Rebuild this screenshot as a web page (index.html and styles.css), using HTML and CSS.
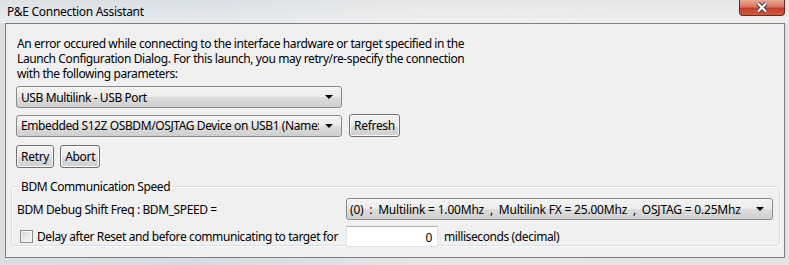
FILE: index.html
```html
<!DOCTYPE html>
<html lang="en">
<head>
    <meta charset="UTF-8" />
    <title>P&amp;E Connection Assistant</title>
    <link rel="stylesheet" href="styles.css">
</head>
<body>

    <div class="window">
        <div class="titlebar">
            <span class="title">P&amp;E Connection Assistant</span>
            <div class="close-btn">
                <svg width="16" height="11" viewBox="0 0 16 11">
                    <path d="M4 1.5 L12 9.5 M12 1.5 L4 9.5" stroke="#3b3f4a" stroke-width="4.2" />
                    <path d="M4 1.5 L12 9.5 M12 1.5 L4 9.5" stroke="#ffffff" stroke-width="2.2" />
                </svg>
            </div>
        </div>

        <div class="client">
            <p class="message">An error occured while connecting to the interface hardware or target specified in the
                Launch Configuration Dialog. For this launch, you may retry/re-specify the connection
                with the following parameters:</p>

            <div class="combo combo-wide">
                <span class="combo-text">USB Multilink - USB Port</span>
                <span class="arrow"></span>
            </div>

            <div class="row">
                <div class="combo combo-wide">
                    <span class="combo-text">Embedded S12Z OSBDM/OSJTAG Device on USB1 (Name:</span>
                    <span class="arrow"></span>
                </div>
                <button class="btn">Refresh</button>
            </div>

            <div class="row buttons">
                <button class="btn">Retry</button>
                <button class="btn">Abort</button>
            </div>

            <fieldset class="group">
                <legend>BDM Communication Speed</legend>

                <div class="field">
                    <span class="field-label">BDM Debug Shift Freq : BDM_SPEED =</span>
                    <div class="combo combo-speed">
                        <span class="combo-text">(0)  :  Multilink = 1.00Mhz  ,  Multilink FX = 25.00Mhz  ,  OSJTAG = 0.25Mhz</span>
                        <span class="arrow"></span>
                    </div>
                </div>

                <div class="field">
                    <label class="field-label check">
                        <span class="checkbox"></span>
                        Delay after Reset and before communicating to target for
                    </label>
                    <div class="delay">
                        <span class="textbox">0</span>
                        <span>milliseconds (decimal)</span>
                    </div>
                </div>
            </fieldset>
        </div>
    </div>

</body>
</html>
```

FILE: styles.css
```css
body {
    margin: 0;
    padding: 0;
    font-family: 'Noto Sans', 'Open Sans', sans-serif;
    font-size: 12px;
    color: #000;
}

.window {
    width: 789px;
    height: 265px;
    box-sizing: border-box;
    padding: 0 4px 7px 5px;
    background: linear-gradient(90deg, #dcdfe2 0%, #d4dbe3 25%, #dde0e3 38%, #e4e5e6 55%, #e2e3e4 100%);
}

.titlebar {
    height: 23px;
    display: flex;
    align-items: flex-start;
    background: linear-gradient(180deg, rgba(255, 255, 255, 0.1) 0%, rgba(255, 255, 255, 0.4) 100%);
    margin: 0 -4px 0 -5px;
}

.title {
    padding: 3px 0 0 7px;
    font-size: 12px;
    color: #000;
    letter-spacing: -0.3px;
}

.close-btn {
    margin-left: auto;
    margin-right: 4px;
    width: 46px;
    height: 16px;
    box-sizing: border-box;
    border: 1px solid #6b2a21;
    border-top: none;
    border-radius: 0 0 4px 4px;
    background: linear-gradient(180deg, #e9a897 0%, #d97760 45%, #c4402a 55%, #d4583c 100%);
    display: flex;
    justify-content: center;
    align-items: center;
}

.client {
    height: 235px;
    box-sizing: border-box;
    border: 1px solid #7d7f82;
    background: #f0f0f0;
    padding: 12px 5px 0 10px;
}

.message {
    margin: 0 0 5px 1px;
    line-height: 15px;
    width: 470px;
    letter-spacing: -0.4px;
}

.row {
    display: flex;
    align-items: center;
    gap: 7px;
    margin-top: 6px;
}

.buttons {
    margin-top: 8px;
    gap: 6px;
}

.combo {
    display: flex;
    align-items: center;
    height: 22px;
    box-sizing: border-box;
    border: 1px solid #8a8a8a;
    border-radius: 3px;
    background: linear-gradient(180deg, #f4f4f4 0%, #ebebeb 50%, #dddddd 51%, #cfcfcf 100%);
    padding: 0 8px 0 4px;
    letter-spacing: -0.4px;
}

.combo-wide {
    width: 326px;
}

.combo-text {
    flex: 1;
    white-space: pre;
    overflow: hidden;
}

.arrow {
    width: 0;
    height: 0;
    margin-left: 6px;
    border-left: 4px solid transparent;
    border-right: 4px solid transparent;
    border-top: 4px solid #000;
}

.btn {
    font-family: inherit;
    font-size: 12px;
    height: 23px;
    padding: 0 4px;
    border: 1px solid #707070;
    border-radius: 3px;
    background: linear-gradient(180deg, #f2f2f2 0%, #ebebeb 50%, #dddddd 51%, #cfcfcf 100%);
    box-shadow: inset 0 0 0 1px #fbfbfb;
    letter-spacing: -0.3px;
}

.group {
    margin: 10px 0 0 -5px;
    width: 768px;
    height: 68px;
    box-sizing: border-box;
    border: 1px solid #d5dfe5;
    border-radius: 3px;
    box-shadow: inset 1px 1px 0 #fff, 1px 1px 0 #fff;
    padding: 3px 6px 0 5px;
}

.group legend {
    padding: 0 2px;
    margin-left: 2px;
    letter-spacing: -0.4px;
}

.field {
    display: grid;
    grid-template-columns: 329px 1fr;
    align-items: center;
    letter-spacing: -0.4px;
}

.field + .field {
    margin-top: 6px;
}

.field-label {
    white-space: nowrap;
}

.combo-speed {
    width: 427px;
    padding-left: 3px;
    letter-spacing: -0.2px;
}

.check {
    display: flex;
    align-items: center;
    gap: 4px;
    padding-left: 3px;
}

.checkbox {
    width: 11px;
    height: 11px;
    border: 1px solid #8e8f8f;
    background: linear-gradient(135deg, #d2d2d2 0%, #ececec 60%, #f6f6f6 100%);
    box-shadow: inset 0 0 0 1px #f4f4f4;
}

.delay {
    display: flex;
    align-items: center;
    gap: 6px;
}

.textbox {
    width: 92px;
    height: 21px;
    box-sizing: border-box;
    border: 1px solid #e2e3ea;
    border-top-color: #abadb3;
    background: #fff;
    text-align: right;
    padding: 2px 5px 0 0;
}
```
